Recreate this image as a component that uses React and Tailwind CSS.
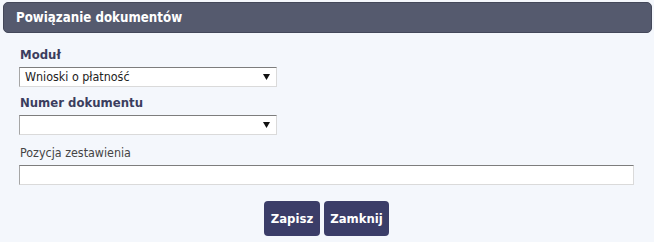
import React from "react";

const font = { fontFamily: '"DejaVu Sans Condensed", "DejaVu Sans", Tahoma, sans-serif' };

function Arrow() {
  return (
    <svg width="7" height="6" viewBox="0 0 7 6" className="shrink-0">
      <polygon points="0,0 7,0 3.5,6" fill="#111" />
    </svg>
  );
}

function Select({ value }) {
  return (
    <div className="w-[258px] h-[20px] bg-white border border-t-[#7d7d7d] border-l-[#a6a6a6] border-r-[#dadada] border-b-[#dadada] flex items-center pl-[5px] pr-[6px]">
      <span className="flex-1 text-[12.4px] leading-[18px] text-[#222]">{value}</span>
      <Arrow />
    </div>
  );
}

export default function App() {
  return (
    <div className="w-[654px] h-[242px] bg-[#f4f7fc] flex flex-col" style={font}>
      <div className="mt-[2px] ml-[3px] mr-[2px] h-[31px] rounded-[5px] bg-[#555a6e] border border-[#44485a] flex items-center pl-[12px]">
        <span className="text-white font-bold text-[13.2px]">Powiązanie dokumentów</span>
      </div>
      <div className="flex flex-col pl-[19px] pr-[20px]">
        <div className="mt-[14px] h-[16px] leading-[16px] text-[13px] font-bold text-[#3b3d5e] pl-px">Moduł</div>
        <div className="mt-[4px]">
          <Select value="Wnioski o płatność" />
        </div>
        <div className="mt-[8px] h-[16px] leading-[16px] text-[13px] font-bold text-[#3b3d5e] pl-px">Numer dokumentu</div>
        <div className="mt-[4px]">
          <Select value="" />
        </div>
        <div className="mt-[10px] h-[16px] leading-[16px] text-[12.4px] text-[#444] pl-px">Pozycja zestawienia</div>
        <div className="mt-[4px] h-[20px] bg-white border border-t-[#7d7d7d] border-l-[#a6a6a6] border-r-[#dadada] border-b-[#dadada]" />
        <div className="mt-[16px] flex justify-center gap-[4px]">
          <button className="h-[35px] w-[56px] rounded-[4px] bg-[#3b3d68] text-white font-bold text-[13px]">Zapisz</button>
          <button className="h-[35px] w-[65px] rounded-[4px] bg-[#3b3d68] text-white font-bold text-[13px]">Zamknij</button>
        </div>
      </div>
    </div>
  );
}
